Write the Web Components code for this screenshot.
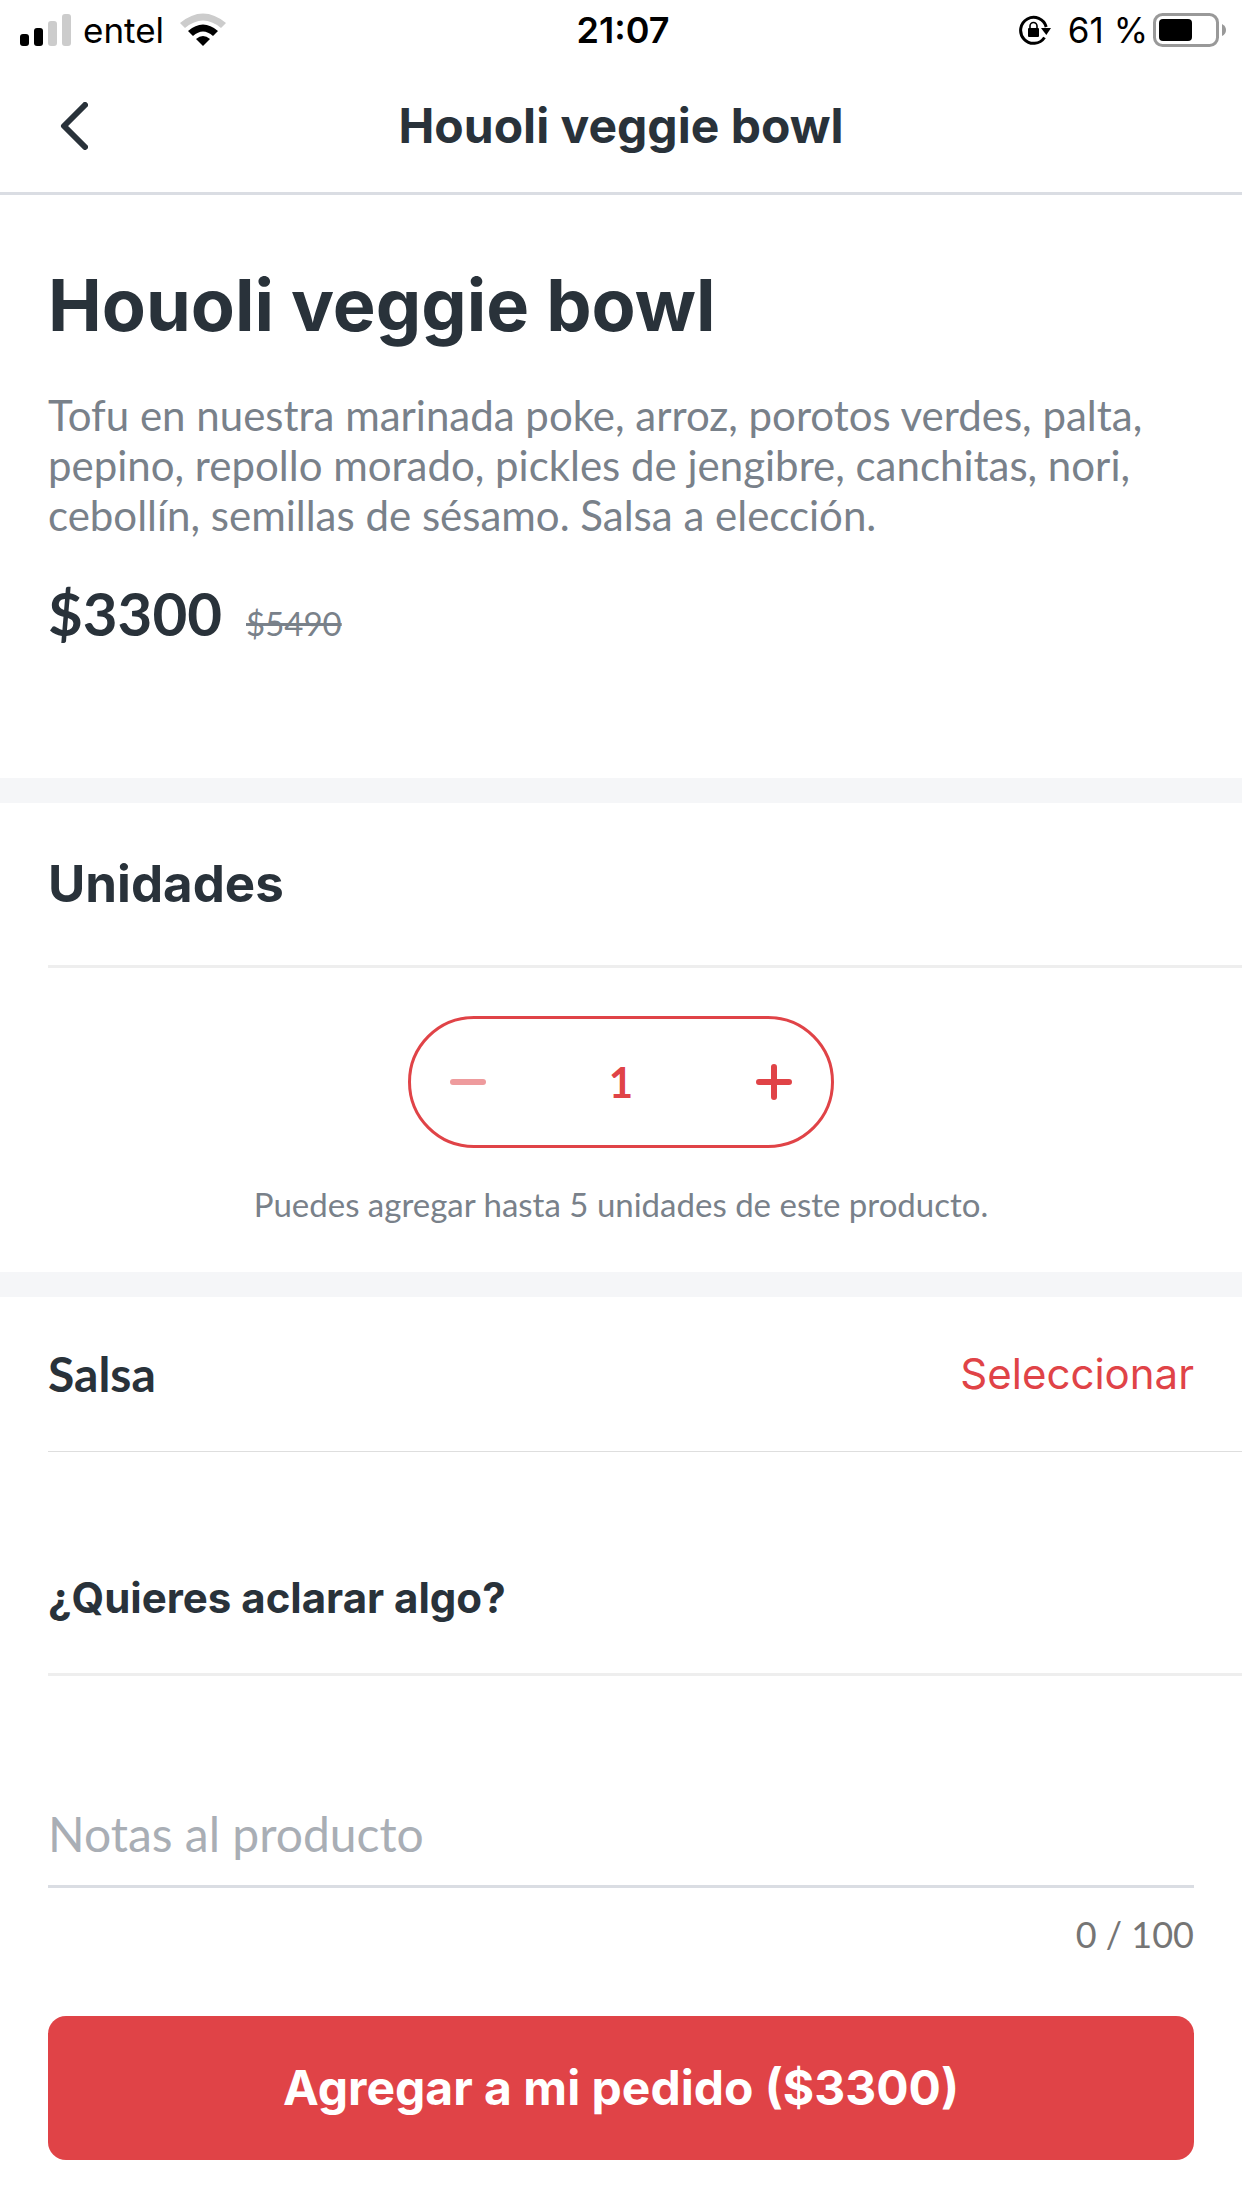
<!DOCTYPE html>
<html lang="es">
<head>
<meta charset="utf-8">
<meta name="viewport" content="width=device-width, initial-scale=1">
<title>Houoli veggie bowl</title>
<style>
:root{--ink:#29323a;--muted:#79818a;--accent:#e04347;--line:#dadde3;--soft:#eeeeee;--band:#f5f6f8;--gutter:48px;--display:Inter,Lato,sans-serif}
html,body{margin:0}
body{background:#fff;color:var(--ink);font-family:Lato,"Open Sans",sans-serif}
</style>
</head>
<body>
<product-screen></product-screen>
<script>
const define=(name,html,setup)=>customElements.define(name,class extends HTMLElement{
  constructor(){super();this.attachShadow({mode:'open'}).innerHTML='<style>*{box-sizing:border-box}button{font:inherit;color:inherit;background:none;border:0;padding:0;margin:0}svg{display:block}</style>'+html;if(setup)setup.call(this,this.shadowRoot)}
});

define('status-bar',`
<style>
:host{display:grid;grid-template-columns:1fr auto 1fr;align-items:center;height:60px;padding:0 16px 0 20px;font:400 35px/60px Inter,sans-serif;color:#000}
div{display:flex;align-items:center}
.right{justify-content:flex-end}
.signal{margin-right:12px}.wifi{margin-left:16px}
.lock{margin-right:16px}.battery{margin-left:5px}
time{font-size:36px;font-weight:600}
</style>
<div><svg class="signal" width="51" height="32" viewBox="0 0 51 32"><rect y="20" width="9" height="12" rx="3"/><rect x="14" y="14" width="9" height="18" rx="3"/><g fill="#ccc"><rect x="28" y="7" width="9" height="25" rx="3"/><rect x="42" width="9" height="32" rx="3"/></g></svg>
<span>entel</span>
<svg class="wifi" width="46" height="34" viewBox="0 0 46 34"><path d="M0 10Q23-9 46 10L41 15Q23 0 5 15Z" fill="#ccc"/><path d="M8 18Q23 5 38 18L33 23Q23 14 13 23Z"/><path d="M16 26Q23 20 30 26L23 33Z"/></svg></div>
<time datetime="21:07">21:07</time>
<div class="right"><svg class="lock" width="33" height="30" viewBox="0 0 33 30"><path d="M25.5 22.5A13 13 0 1 1 27.2 12" fill="none" stroke="#000" stroke-width="3"/><path d="M22 13H32L27.3 20Z"/><rect x="9" y="13" width="11" height="9" rx="1"/><path d="M11 14V11a3.5 3.5 0 0 1 7 0v3" fill="none" stroke="#000" stroke-width="1.6"/></svg>
<span>61 %</span>
<svg class="battery" width="73" height="34" viewBox="0 0 73 34"><rect x="1.5" y="1.5" width="63" height="31" rx="8" fill="none" stroke="#999" stroke-width="3"/><rect x="6" y="6" width="33" height="22" rx="4"/><path d="M69 11Q73 13 73 17T69 23Z" fill="#999"/></svg></div>`);

define('nav-bar',`
<style>
:host{display:grid;grid-template-columns:60px 1fr 60px;align-items:center;height:135px;padding:0 var(--gutter);border-bottom:3px solid var(--line)}
button{display:flex;width:60px;height:96px;align-items:center;padding-left:12px}
h1{margin:0;font:700 48px/60px var(--display);text-align:center}
</style>
<button type="button" aria-label="Volver"><svg width="28" height="48" viewBox="0 0 28 48"><path d="M25 3L4 24L25 45" fill="none" stroke="#29323a" stroke-width="6" stroke-linecap="round" stroke-linejoin="round"/></svg></button>
<h1><slot></slot></h1>`);

define('product-summary',`
<style>
:host{display:block;padding:65px var(--gutter) 129px}
h2{margin:0 0 40px;font:700 72px/90px var(--display)}
p{margin:0 0 37px;font-size:42px;line-height:50px;color:var(--muted)}
.prices{display:flex;align-items:baseline;gap:24px;line-height:72px}
strong{font-size:60px}
s{font-size:33px;line-height:40px;color:var(--muted)}
</style>
<h2><slot name="name"></slot></h2>
<p><slot></slot></p>
<div class="prices"><strong><slot name="price"></slot></strong><s><slot name="before"></slot></s></div>`);

define('section-band',`<style>:host{display:block;height:25px;background:var(--band)}</style>`);

define('section-head',`
<style>
:host{display:flex;justify-content:space-between;align-items:center;margin-left:var(--gutter);padding:51px var(--gutter) 51px 0;border-bottom:3px solid var(--soft)}
:host([size="option"]){padding-block:47px;border-bottom:1px solid #dedede}
h3{margin:0;font:700 51px/60px var(--display)}
:host([size="option"]) h3{font:700 48px/60px Lato,sans-serif}
:host([size="small"]) h3{font-size:42px;line-height:48px}
</style>
<h3><slot></slot></h3><slot name="action"></slot>`);

define('unit-stepper',`
<style>
:host{display:flex;flex-direction:column;align-items:center;gap:36px;padding:48px var(--gutter)}
.pill{display:flex;align-items:center;justify-content:space-between;width:426px;height:132px;border:3px solid var(--accent);border-radius:66px;color:var(--accent);padding:0 24px}
button{width:66px;height:90px;display:grid;place-items:center}
button:disabled{opacity:.53}
output{font-size:42px;line-height:60px;font-weight:700}
p{margin:0;font-size:33px;line-height:40px;color:var(--muted);text-align:center}
</style>
<div class="pill" role="group" aria-label="Unidades">
<button type="button" class="less" aria-label="Quitar" disabled><svg width="36" height="36" viewBox="0 0 36 36"><path d="M3 18H33" stroke="currentColor" stroke-width="6" stroke-linecap="round"/></svg></button>
<output>1</output>
<button type="button" class="more" aria-label="Agregar"><svg width="36" height="36" viewBox="0 0 36 36"><path d="M3 18H33M18 3V33" stroke="currentColor" stroke-width="6" stroke-linecap="round"/></svg></button>
</div>
<p><slot></slot></p>`,function(r){
  const out=r.querySelector('output'),less=r.querySelector('.less'),more=r.querySelector('.more');
  const step=d=>{const n=Math.min(5,Math.max(1,+out.textContent+d));out.textContent=n;less.disabled=n===1;more.disabled=n===5};
  less.onclick=()=>step(-1);more.onclick=()=>step(1);
});

define('note-field',`
<style>
:host{display:block;padding:105px var(--gutter) 0}
label{display:block}
input{display:block;width:100%;height:107px;border:0;border-bottom:3px solid var(--line);border-radius:0;padding:0;margin:0;background:none;outline:0;font:400 48px/60px Lato,sans-serif;color:var(--ink)}
input::placeholder{color:#a9aeb5;opacity:1}
.count{margin-top:24px;text-align:right;font-size:36px;line-height:44px;color:#757575}
</style>
<label><input type="text" maxlength="100" placeholder="Notas al producto" aria-label="Notas al producto"></label>
<div class="count"><span>0</span> / 100</div>`,function(r){
  r.querySelector('input').oninput=e=>{r.querySelector('span').textContent=e.target.value.length};
});

define('order-button',`
<style>
:host{display:block;padding:60px var(--gutter) 48px;margin-top:auto}
button{width:100%;height:144px;border-radius:18px;background:var(--accent);color:#fff;font:700 48px/60px var(--display)}
</style>
<button type="button"><slot></slot></button>`);

define('product-screen',`
<style>
:host{display:flex;flex-direction:column;min-height:100vh}
.notes{margin-top:71px}
.choose{font:400 42px/60px var(--display);color:var(--accent)}
</style>
<status-bar></status-bar>
<nav-bar>Houoli veggie bowl</nav-bar>
<product-summary><span slot="name">Houoli veggie bowl</span>Tofu en nuestra marinada poke, arroz, porotos verdes, palta, pepino, repollo morado, pickles de jengibre, canchitas, nori, cebollín, semillas de sésamo. Salsa a elección.<span slot="price">$3300</span><span slot="before">$5490</span></product-summary>
<section-band></section-band>
<section-head>Unidades</section-head>
<unit-stepper>Puedes agregar hasta 5 unidades de este producto.</unit-stepper>
<section-band></section-band>
<section-head size="option">Salsa<button type="button" class="choose" slot="action">Seleccionar</button></section-head>
<section-head class="notes" size="small">¿Quieres aclarar algo?</section-head>
<note-field></note-field>
<order-button>Agregar a mi pedido ($3300)</order-button>`);
</script>
</body>
</html>
